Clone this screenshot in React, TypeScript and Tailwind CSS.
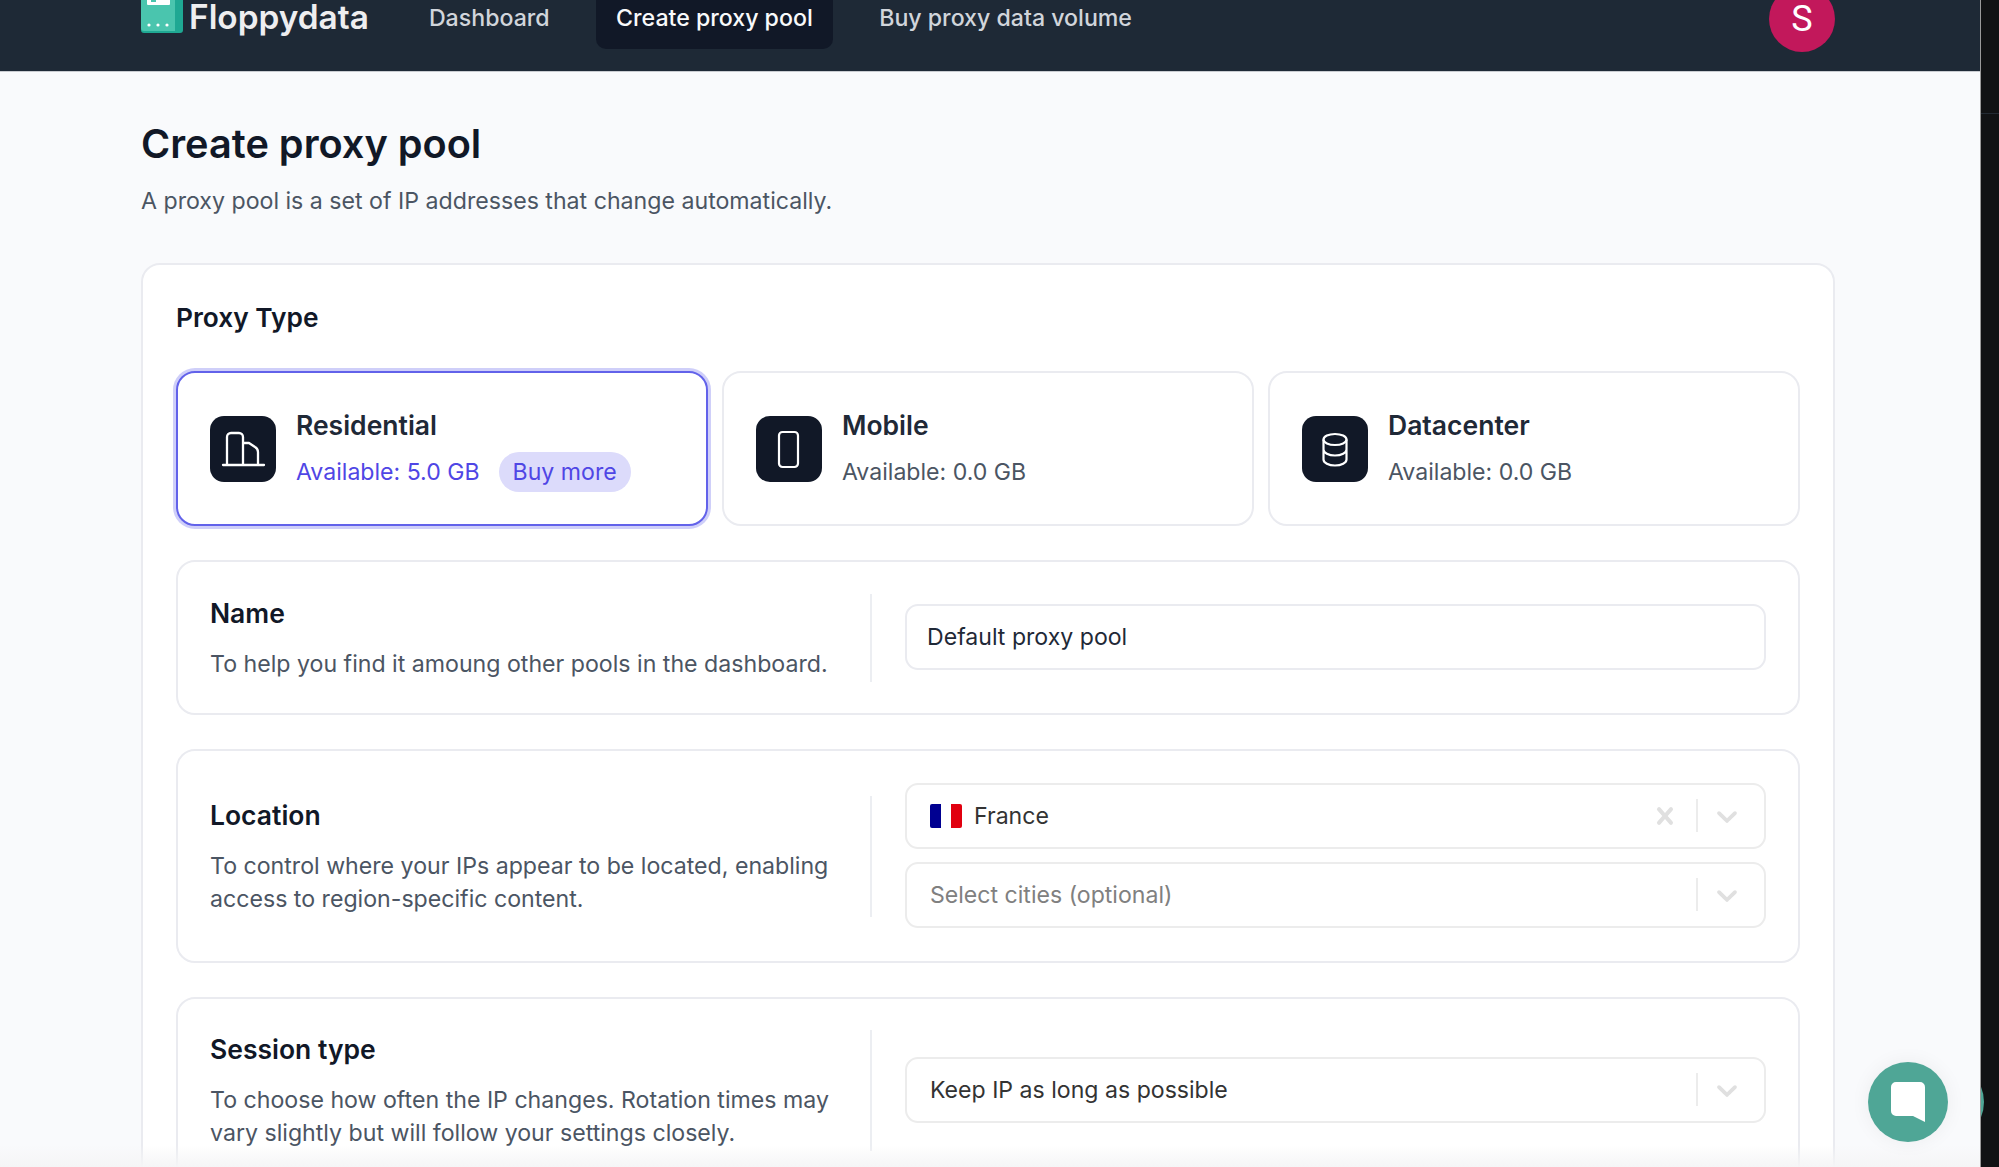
import React from "react";

const font = "font-['Inter',sans-serif]";

function Logo() {
  return (
    <svg viewBox="0 0 42 42" className="w-[42px] h-[42px] shrink-0 -translate-y-[7px]">
      <rect x="0" y="0" width="42" height="42" rx="3" fill="#1fa893" />
      <path d="M0 3a3 3 0 0 1 3-3h31v40H3a3 3 0 0 1-3-3z" fill="#4ac5ae" />
      <rect x="6" y="0" width="23" height="14" rx="1" fill="#ffffff" />
      <rect x="10" y="2" width="5" height="9" fill="#4ac5ae" />
      <circle cx="8" cy="34" r="1.6" fill="#fff" />
      <circle cx="17" cy="34" r="1.6" fill="#fff" />
      <circle cx="26" cy="34" r="1.6" fill="#fff" />
    </svg>
  );
}

function HouseIcon() {
  return (
    <svg viewBox="0 0 66 66" className="w-[66px] h-[66px]" fill="none" stroke="#fff" strokeWidth="2.3" strokeLinecap="round" strokeLinejoin="round">
      <path d="M13 49h41M17 49V21a4 4 0 0 1 4-4h8a4 4 0 0 1 4 4v28M33 27h6l6 4a6 6 0 0 1 3 5v13" />
    </svg>
  );
}
function PhoneIcon() {
  return (
    <svg viewBox="0 0 66 66" className="w-[66px] h-[66px]" fill="none" stroke="#fff" strokeWidth="2.2">
      <rect x="23" y="16" width="19" height="35" rx="3.5" />
    </svg>
  );
}
function DbIcon() {
  return (
    <svg viewBox="0 0 66 66" className="w-[66px] h-[66px]" fill="none" stroke="#fff" strokeWidth="2.2">
      <ellipse cx="33" cy="23.5" rx="11.5" ry="5.5" />
      <path d="M21.5 23.5v20c0 3.3 5.1 6 11.5 6s11.5-2.7 11.5-6v-20M21.5 33.5c0 3.3 5.1 6 11.5 6s11.5-2.7 11.5-6" />
    </svg>
  );
}

function Chevron() {
  return (
    <svg viewBox="0 0 20 20" className="w-[34px] h-[34px] shrink-0" fill="#e0e0e0">
      <path d="M4.516 7.548c.436-.446 1.043-.481 1.576 0L10 11.295l3.908-3.747c.533-.481 1.141-.446 1.574 0 .436.445.408 1.197 0 1.615-.406.418-4.695 4.502-4.695 4.502a1.095 1.095 0 0 1-1.576 0S4.924 9.581 4.516 9.163c-.409-.418-.436-1.17 0-1.615z" />
    </svg>
  );
}
function Cross() {
  return (
    <svg viewBox="0 0 20 20" className="w-[34px] h-[34px] shrink-0" fill="#e0e0e0">
      <path d="M14.348 14.849a1.2 1.2 0 0 1-1.697 0L10 11.819l-2.651 3.029a1.2 1.2 0 1 1-1.697-1.697l2.758-3.15-2.759-3.152a1.2 1.2 0 1 1 1.697-1.697L10 8.183l2.651-3.031a1.2 1.2 0 1 1 1.697 1.697l-2.758 3.152 2.758 3.15a1.2 1.2 0 0 1 0 1.698z" />
    </svg>
  );
}

function TypeCard({ icon, name, avail, active }: { icon: React.ReactNode; name: string; avail: string; active?: boolean }) {
  return (
    <div
      className={
        active
          ? "h-[155px] rounded-[19px] bg-white border-2 border-[#6262ea] shadow-[0_0_0_3px_#cfcff9] flex items-center gap-[20px] px-[32px]"
          : "h-[155px] rounded-[19px] bg-white border-2 border-[#eaebf0] flex items-center gap-[20px] px-[32px]"
      }
    >
      <div className="w-[66px] h-[66px] rounded-[14px] bg-[#111827] flex items-center justify-center shrink-0">{icon}</div>
      <div className="flex flex-col gap-[14px]">
        <div className="text-[26.5px] leading-[33px] font-semibold text-[#1f2937]">{name}</div>
        <div className="flex items-center gap-[19px] h-[33px]">
          <span className={active ? "text-[23.1px] leading-[33px] text-[#4f46e5]" : "text-[23.1px] leading-[33px] text-[#4b5563]"}>{avail}</span>
          {active && (
            <span className="h-[40px] px-[14px] rounded-full bg-[#dcdbfb] text-[23.1px] text-[#4f46e5] flex items-center">Buy more</span>
          )}
        </div>
      </div>
    </div>
  );
}

function Section({ title, desc, children, className }: { title: string; desc: React.ReactNode; children: React.ReactNode; className: string }) {
  return (
    <div className={"rounded-[19px] bg-white border-2 border-[#eaebf0] px-[32px] flex items-center " + className}>
      <div className="w-[662px] shrink-0 border-r-2 border-[#eceef2] pt-[3px] pb-px">
        <div className="text-[26.5px] leading-[33px] font-semibold text-[#111827]">{title}</div>
        <div className="mt-[18px] text-[23.15px] leading-[33px] text-[#4b5563] whitespace-nowrap">{desc}</div>
      </div>
      <div className="flex-1 pl-[33px] pb-[2px] flex flex-col gap-[13px]">{children}</div>
    </div>
  );
}

function SelectBox({ children, clear }: { children: React.ReactNode; clear?: boolean }) {
  return (
    <div className="h-[66px] rounded-[13px] border-2 border-[#ececec] bg-white flex items-center pl-[23px] pr-[20px] text-[23.1px]">
      <div className="flex-1 flex items-center gap-[12px] pt-[2px]">{children}</div>
      {clear && <Cross />}
      <div className="w-[2px] h-[33px] bg-[#ececec] ml-[14px] mr-[12px]" />
      <Chevron />
    </div>
  );
}

export default function App() {
  return (
    <div className={"w-full h-[1167px] overflow-hidden flex relative bg-[#111214] " + font}>
      <div className="w-[1981px] shrink-0 bg-[#f9fafc] h-full border-r border-[#9a9a9a] overflow-hidden">
        <header className="h-[106px] -mt-[34px] bg-[#1e2936] border-b border-[#c9ccd1] flex items-center pl-[141px] pr-[145px] overflow-hidden">
          <div className="flex items-center gap-[6px]">
            <Logo />
            <span className="text-[33.4px] font-semibold text-[#eeeef0] leading-none -translate-y-[1px]">Floppydata</span>
          </div>
          <nav className="flex items-center gap-[26.5px] ml-[40px] flex-1 text-[23.15px] font-medium">
            <span className="px-[20px] h-[60px] flex items-center text-[#d1d5db]">Dashboard</span>
            <span className="px-[20px] h-[60px] flex items-center rounded-[10px] bg-[#111827] text-[#f9fafb]">Create proxy pool</span>
            <span className="px-[20px] h-[60px] flex items-center text-[#d1d5db]">Buy proxy data volume</span>
          </nav>
          <div className="w-[66px] h-[66px] rounded-full bg-[#c2185b] flex items-center justify-center text-[36px] leading-none text-white font-['Roboto',sans-serif]">S</div>
        </header>

        <main className="pl-[141px] pr-[145px]">
          <h1 className="mt-[48px] text-[39.7px] leading-[48px] font-semibold text-[#111827]">Create proxy pool</h1>
          <p className="mt-[17px] text-[23.15px] leading-[33px] text-[#4b5563]">A proxy pool is a set of IP addresses that change automatically.</p>

          <div className="mt-[45px] rounded-[19px] bg-white border-2 border-[#eaebf0] px-[33px] pb-[40px]">
            <div className="pt-[36px] text-[26.3px] leading-[33px] font-semibold text-[#111827]">Proxy Type</div>
            <div className="mt-[37px] grid grid-cols-3 gap-[14px]">
              <TypeCard active icon={<HouseIcon />} name="Residential" avail="Available: 5.0 GB" />
              <TypeCard icon={<PhoneIcon />} name="Mobile" avail="Available: 0.0 GB" />
              <TypeCard icon={<DbIcon />} name="Datacenter" avail="Available: 0.0 GB" />
            </div>

            <div className="mt-[34px] flex flex-col gap-[34px]">
              <Section className="h-[155px]" title="Name" desc="To help you find it amoung other pools in the dashboard.">
                <div className="h-[66px] rounded-[13px] border-2 border-[#eaebf0] bg-white flex items-center px-[20px] pt-[2px] text-[23.1px] text-[#1f2937]">Default proxy pool</div>
              </Section>
              <Section
                className="h-[214px]"
                title="Location"
                desc={<>To control where your IPs appear to be located, enabling<br />access to region-specific content.</>}
              >
                <SelectBox clear>
                  <span className="w-[32px] h-[24px] flex rounded-[2px] overflow-hidden">
                    <span className="flex-1 bg-[#000091]" />
                    <span className="flex-1 bg-white" />
                    <span className="flex-1 bg-[#e1000f]" />
                  </span>
                  <span className="text-[#333333]">France</span>
                </SelectBox>
                <SelectBox>
                  <span className="text-[#808080]">Select cities (optional)</span>
                </SelectBox>
              </Section>
              <Section
                className="h-[187px]"
                title="Session type"
                desc={<>To choose how often the IP changes. Rotation times may<br />vary slightly but will follow your settings closely.</>}
              >
                <SelectBox>
                  <span className="text-[#333333]">Keep IP as long as possible</span>
                </SelectBox>
              </Section>
            </div>
          </div>
        </main>
      </div>

      <div className="flex-1 relative overflow-hidden">
        <div className="mt-[113px] h-px bg-[#232a33]" />
        <div className="absolute -left-[77px] top-[1062px] w-[80px] h-[80px] rounded-full bg-[#4fa696]" />
      </div>

      <div className="absolute left-0 bottom-0 w-[1980px] h-[22px] bg-gradient-to-b from-transparent to-[#f5f5f6]" />
      <div className="absolute left-[1868px] top-[1062px] w-[80px] h-[80px] rounded-full bg-[#4fa696] flex items-center justify-center shadow-[0_0_20px_rgba(0,0,0,0.06)]">
        <svg viewBox="0 0 34 40" className="w-[34px] h-[40px]" fill="#fff">
          <path d="M5 0h24a5 5 0 0 1 5 5v35l-12-6H5a5 5 0 0 1-5-5V5a5 5 0 0 1 5-5z" />
        </svg>
      </div>
    </div>
  );
}
